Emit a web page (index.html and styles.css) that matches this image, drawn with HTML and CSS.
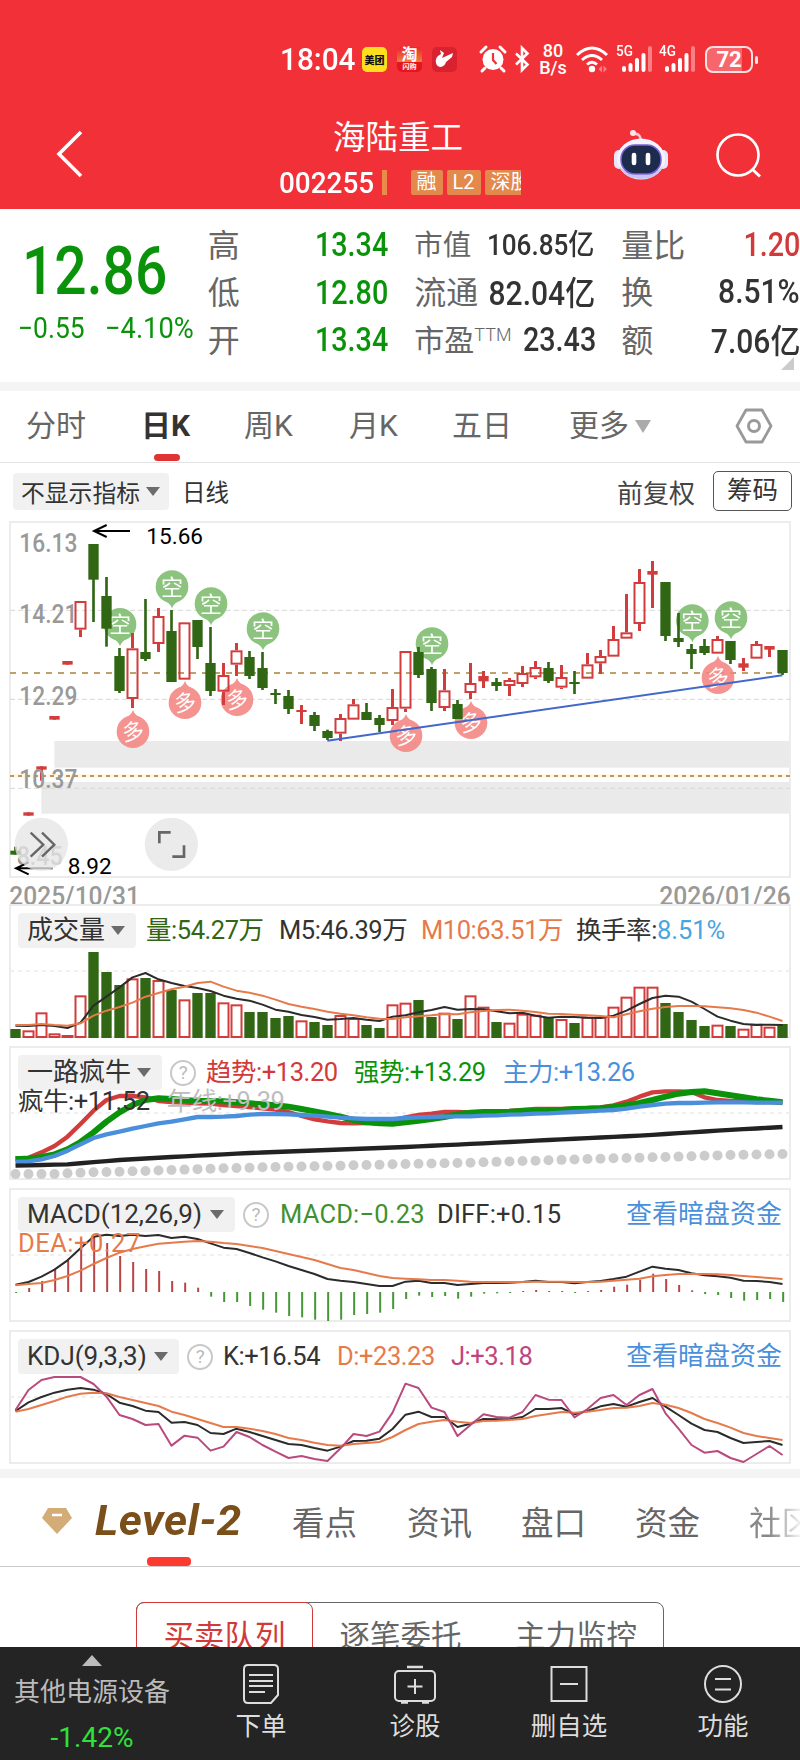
FILE: index.html
```html
<!DOCTYPE html>
<html lang="zh-CN">
<head>
  <meta charset="UTF-8">
  <meta name="viewport" content="width=device-width, initial-scale=1.0">
  <title>海陆重工 002255</title>
  <link rel="stylesheet" href="styles.css">
</head>
<body>

  <header class="top">
    <div class="status">
      <span class="time num">18:04</span>
      <span class="app meituan">美团</span>
      <span class="app taobao">淘<small>闪购</small></span>
      <span class="app bird">
        <svg width="26" height="26" viewBox="0 0 26 26"><path d="M8 4 L12 7 L10 12 L21 7 L20 11 L14 16 Q13 20 9 21 Q5 21 4 17 Q3 13 6 10 L9 8Z" fill="#fff"/></svg>
      </span>
      <svg class="alarm" width="28" height="28" viewBox="0 0 28 28">
        <circle cx="14" cy="14.500" r="10.500" fill="#fff"/>
        <path d="M2 7 L7 2 M26 7 L21 2 M6 23 L3 26 M22 23 L25 26" stroke="#fff" stroke-width="3" stroke-linecap="round"/>
        <path d="M14 8 V15 L17.500 19" stroke="#f23038" stroke-width="2.200" fill="none"/>
      </svg>
      <svg class="bt" width="16" height="28" viewBox="0 0 16 28"><path d="M2 8.500 L13.500 19.500 L8 25 V3 L13.500 8.500 L2 19.500" fill="none" stroke="#fff" stroke-width="2.600"/></svg>
      <span class="speed">80<br>B/s</span>
      <svg class="wifi" width="34" height="28" viewBox="0 0 34 28">
        <path d="M2 10 Q17 -4 32 10 M7 15 Q17 6 27 15 M12 19.500 Q17 15 22 19.500" fill="none" stroke="#fff" stroke-width="3"/>
        <circle cx="17" cy="24" r="3.200" fill="#fff"/>
        <path d="M23.500 24 L27 20.500 V27.500Z M32 24 L28.500 20.500 V27.500Z" fill="#f98084"/>
      </svg>
      <span class="signal"><b>5G</b>
        <svg width="36" height="28" viewBox="0 0 36 28"><path d="M6 23 V25 M12.500 20 V25 M19 15 V25 M25.500 10 V25" stroke="#fff" stroke-width="4" stroke-linecap="round"/><path d="M32 3 V25" stroke="#f98084" stroke-width="4" stroke-linecap="round"/></svg>
      </span>
      <span class="signal"><b>4G</b>
        <svg width="36" height="28" viewBox="0 0 36 28"><path d="M6 23 V25 M12.500 20 V25 M19 15 V25 M25.500 10 V25" stroke="#fff" stroke-width="4" stroke-linecap="round"/><path d="M32 3 V25" stroke="#f98084" stroke-width="4" stroke-linecap="round"/></svg>
      </span>
      <span class="battery">72</span>
    </div>

    <div class="title-bar">
      <svg class="back" width="30" height="50" viewBox="0 0 30 50"><path d="M26 3 L4 25 L26 47" fill="none" stroke="#fff" stroke-width="3.600"/></svg>
      <div class="stock">
        <h1>海陆重工</h1>
        <div class="code-row">
          <span class="code num">002255</span>
          <i class="bar"></i>
          <div class="tags"><span>融</span><span>L2</span><span>深股</span></div>
        </div>
      </div>
      <svg class="robot" width="56" height="54" viewBox="0 0 56 54">
        <path d="M28 12 Q27 5 21 6" fill="none" stroke="#f5c8d8" stroke-width="2.500"/>
        <circle cx="20" cy="5" r="3" fill="#fde5ea"/>
        <rect x="1" y="22" width="10" height="19" rx="5" fill="#e9e5fb"/>
        <rect x="45" y="22" width="10" height="19" rx="5" fill="#e9e5fb"/>
        <ellipse cx="28" cy="31" rx="24" ry="20.500" fill="#f4f3ff"/>
        <path d="M6 38 Q12 51 28 51 Q44 51 50 38 Q42 47 28 47 Q14 47 6 38Z" fill="#c9c4f5"/>
        <rect x="8" y="17" width="40" height="29" rx="14" fill="#1d2c4d" stroke="#7a63d8" stroke-width="1.500"/>
        <path d="M21 27 V35 M35 27 V35" stroke="#fff" stroke-width="4.600" stroke-linecap="round"/>
      </svg>
      <svg class="search" width="46" height="46" viewBox="0 0 46 46"><circle cx="22" cy="22" r="20.500" fill="none" stroke="#fff" stroke-width="2.600"/><path d="M36 36 L44 43.500" stroke="#fff" stroke-width="3"/></svg>
    </div>
  </header>

  <section class="quote">
    <div class="price">
      <div class="now num">12.86</div>
      <div class="change"><span class="num">−0.55</span><span class="num">−4.10%</span></div>
    </div>
    <dl class="col c1">
      <div><dt>高</dt><dd class="green">13.34</dd></div>
      <div><dt>低</dt><dd class="green">12.80</dd></div>
      <div><dt>开</dt><dd class="green">13.34</dd></div>
    </dl>
    <dl class="col c2">
      <div><dt class="s28">市值</dt><dd class="s29">106.85亿</dd></div>
      <div><dt>流通</dt><dd class="wide">82.04亿</dd></div>
      <div><dt class="s30">市盈<sup>TTM</sup></dt><dd>23.43</dd></div>
    </dl>
    <dl class="col c3">
      <div><dt>量比</dt><dd class="red">1.20</dd></div>
      <div><dt>换</dt><dd class="wide">8.51%</dd></div>
      <div><dt>额</dt><dd class="wide">7.06亿</dd></div>
    </dl>
    <i class="corner"></i>
  </section>

  <nav class="periods">
    <a>分时</a>
    <a class="active">日K</a>
    <a>周K</a>
    <a>月K</a>
    <a>五日</a>
    <a>更多<i class="caret"></i></a>
    <svg width="38" height="36" viewBox="0 0 38 36"><path d="M11 2 H27 L36 18 L27 34 H11 L2 18Z" fill="none" stroke="#999" stroke-width="2.800" stroke-linejoin="round"/><circle cx="19" cy="18" r="5.500" fill="none" stroke="#999" stroke-width="3"/></svg>
  </nav>

  <div class="tools">
    <span class="pill">不显示指标<i class="caret"></i></span>
    <span class="line-name">日线</span>
    <span class="adjust">前复权</span>
    <span class="chips">筹码</span>
  </div>

  <section class="main-chart">
    <svg id="kline" width="800" height="390" viewBox="0 0 2400 1170"></svg>
  </section>

  <section class="panel vol">
    <svg id="vol" width="800" height="142" viewBox="0 0 2400 426"></svg>
    <div class="head">
      <span class="pill">成交量<i class="caret"></i></span>
      <span class="dgreen">量:54.27万</span>
      <span>M5:46.39万</span>
      <span class="orange">M10:63.51万</span>
      <span>换手率:<em>8.51%</em></span>
    </div>
  </section>

  <section class="panel trend">
    <svg id="trend" width="800" height="142" viewBox="0 0 2400 426"></svg>
    <div class="head">
      <span class="pill">一路疯牛<i class="caret"></i></span>
      <i class="help">?</i>
      <span class="red">趋势:+13.20</span>
      <span class="green">强势:+13.29</span>
      <span class="blue">主力:+13.26</span>
    </div>
    <div class="head second"><span>疯牛:+11.52</span><span class="gray">年线:+9.39</span></div>
  </section>

  <section class="panel macd">
    <svg id="macd" width="800" height="142" viewBox="0 0 2400 426"></svg>
    <div class="head">
      <span class="pill">MACD(12,26,9)<i class="caret"></i></span>
      <i class="help">?</i>
      <span class="mgreen">MACD:−0.23</span>
      <span>DIFF:+0.15</span>
      <a class="blue">查看暗盘资金</a>
    </div>
    <div class="head second"><span class="orange">DEA:+0.27</span></div>
  </section>

  <section class="panel kdj">
    <svg id="kdj" width="800" height="142" viewBox="0 0 2400 426"></svg>
    <div class="head">
      <span class="pill">KDJ(9,3,3)<i class="caret"></i></span>
      <i class="help">?</i>
      <span>K:+16.54</span>
      <span class="orange">D:+23.23</span>
      <span class="pink">J:+3.18</span>
      <a class="blue">查看暗盘资金</a>
    </div>
  </section>

  <nav class="info-tabs">
    <svg width="32" height="28" viewBox="0 0 32 28"><path d="M7 1 H25 L31 11 L16 27 L1 11Z" fill="#d3ac78"/><path d="M11 8 H21" stroke="#fff" stroke-width="2.500"/></svg>
    <a class="level">Level-2</a>
    <a>看点</a>
    <a>资讯</a>
    <a>盘口</a>
    <a>资金</a>
    <a class="fade">社区</a>
  </nav>

  <div class="segments">
    <a class="on">买卖队列</a><a>逐笔委托</a><a>主力监控</a>
  </div>

  <footer class="bottom">
    <div class="sector">
      <i class="up"></i>
      <span>其他电源设备</span>
      <b class="num">-1.42%</b>
    </div>
    <a>
      <svg width="44" height="42" viewBox="0 0 44 42"><path d="M9 2 H35 Q39 2 39 6 V32 L32 40 H9 Q5 40 5 36 V6 Q5 2 9 2Z M10 12 H34 M10 18 H34 M10 23 H34 M10 29 H26" fill="none" stroke="#ddd" stroke-width="2"/></svg>
      下单
    </a>
    <a>
      <svg width="44" height="42" viewBox="0 0 44 42"><rect x="2" y="8" width="40" height="30" rx="4" fill="none" stroke="#ddd" stroke-width="2"/><path d="M14 4 H30 M8 39.500 H15 M29 39.500 H36" stroke="#ddd" stroke-width="2.500"/><path d="M22 16 V31 M14.500 23.500 H29.500" stroke="#ddd" stroke-width="2"/></svg>
      诊股
    </a>
    <a>
      <svg width="44" height="42" viewBox="0 0 44 42"><path d="M4.500 4 H39.500 V38 H4.500Z M13 21 H31" fill="none" stroke="#ddd" stroke-width="2"/></svg>
      删自选
    </a>
    <a>
      <svg width="44" height="42" viewBox="0 0 44 42"><circle cx="22" cy="21" r="18" fill="none" stroke="#ddd" stroke-width="2"/><path d="M14 16 H30 M14 26.500 H30" stroke="#ddd" stroke-width="2.200"/></svg>
      功能
    </a>
  </footer>

  <script src="charts.js"></script>
</body>
</html>
```

FILE: styles.css
```css
* {
  box-sizing: border-box;
}

body {
  margin: 0;
  width: 800px;
  height: 1760px;
  overflow: hidden;
  display: flex;
  flex-direction: column;
  background: #fff;
  color: #333;
  font-family: Roboto, "Noto Sans CJK SC", sans-serif;
}

body > * {
  flex-shrink: 0;
}

svg {
  display: block;
  overflow: visible;
}

i, em {
  font-style: normal;
}

.num {
  display: inline-block;
  transform-origin: 0 50%;
}

.red { color: #d23a3a; }
.green { color: #0a930a; }
.dgreen { color: #336614; }
.mgreen { color: #3f9130; }
.orange { color: #e67a4a; }
.blue { color: #4a8fdc; }
.pink { color: #c0457e; }
.gray { color: #bdbdbd; }

.caret {
  display: inline-block;
  border: 7px solid transparent;
  border-top: 9px solid #6b6b6b;
  border-bottom: 0;
}

/* header */
.top {
  height: 209px;
  background: #f23038;
  color: #fff;
}

.status {
  display: flex;
  align-items: center;
  height: 118px;
  padding-left: 280px;
}

.time {
  width: 82px;
  font-size: 32px;
  font-weight: 500;
  transform: scaleX(.93);
}

.app {
  display: flex;
  width: 25px;
  height: 25px;
  margin-right: 10px;
  border-radius: 5px;
  justify-content: center;
  align-items: center;
  flex-shrink: 0;
}

.meituan {
  background: #ffde1f;
  color: #111;
  font-size: 10px;
  font-weight: 900;
}

.taobao {
  flex-direction: column;
  background: linear-gradient(#e8262c, #ee7f3c 60%, #e5141e 62%);
  font-size: 16px;
  line-height: 16px;
  font-weight: 700;
}

.taobao small {
  font-size: 7px;
  line-height: 8px;
}

.bird {
  background: #d9222f;
}

.alarm { margin-left: 12px; }
.bt { margin-left: 7px; }

.speed {
  width: 32px;
  margin-left: 7px;
  font-size: 18px;
  line-height: 17px;
  text-align: center;
  font-weight: 500;
}

.wifi { margin-left: 6px; }

.signal {
  position: relative;
  width: 36px;
  margin-left: 7px;
}

.wifi + .signal { margin-left: 9px; }

.signal b {
  position: absolute;
  left: -2px;
  top: -1px;
  font-size: 15px;
  line-height: 15px;
  font-weight: 500;
  transform: scaleX(.9);
  transform-origin: 0 0;
}

.battery {
  position: relative;
  width: 48px;
  height: 27px;
  margin-left: 8px;
  border: 2px solid #fde0e1;
  border-radius: 8px;
  background: linear-gradient(90deg, #f7666c 80%, transparent 80%);
  font-size: 22px;
  font-weight: 700;
  line-height: 23px;
  text-align: center;
}

.battery::after {
  content: "";
  position: absolute;
  right: -7px;
  top: 8px;
  width: 3px;
  height: 8px;
  border-radius: 2px;
  background: #fde0e1;
}

.title-bar {
  display: flex;
  height: 91px;
  padding-left: 55px;
}

.back { margin-top: 11px; }

.stock {
  width: 242px;
  margin-left: 194px;
}

.stock h1 {
  margin: 1px 0 0 54px;
  font-size: 32.500px;
  line-height: 38px;
  font-weight: 400;
}

.code-row {
  display: flex;
  align-items: center;
  height: 32px;
  margin-top: 9px;
}

.code {
  width: 103px;
  font-size: 30px;
  font-weight: 500;
  transform: scaleX(.93);
}

.bar {
  width: 5px;
  height: 25px;
  background: #ea8b4c;
}

.tags {
  display: flex;
  gap: 4px;
  width: 111px;
  margin-left: 24px;
  overflow: hidden;
}

.tags span {
  flex-shrink: 0;
  height: 25px;
  padding: 0 6px;
  border-radius: 2px;
  background: #e2894b;
  font-size: 20px;
  line-height: 24px;
}

.robot { margin: 10px 0 0 92px; }
.search { margin: 15px 0 0 47px; }

/* quote */
.quote {
  position: relative;
  display: flex;
  box-sizing: content-box;
  height: 173px;
  border-bottom: 9px solid #f4f4f4;
}

.price {
  width: 208px;
  padding: 21px 0 0 22px;
  color: #0a930a;
}

.now {
  font-size: 67px;
  line-height: 82px;
  font-weight: 500;
  transform: scaleX(.85);
}

.change {
  display: flex;
  margin: -1px 0 0 -4px;
  font-size: 29px;
  line-height: 34px;
}

.change span {
  width: 87px;
  transform: scaleX(.91);
}

.change span + span { transform: scaleX(.94); }

.col {
  margin: 12px 0 0;
}

.col div {
  display: flex;
  justify-content: space-between;
  align-items: center;
  height: 47.500px;
}

.c1 { width: 181px; }
.c2 { width: 180px; margin-left: 26px; }
.c3 { width: 179px; margin-left: 27px; }

dt {
  margin-top: -4px;
  color: #666;
  font-size: 32px;
  white-space: nowrap;
}

dt.s28 { font-size: 28.500px; }
dt.s30 { font-size: 30px; }

dt sup {
  font-size: 18px;
  font-weight: 300;
  line-height: 0;
  vertical-align: 10px;
}

dd {
  margin: 0;
  font-size: 33px;
  font-weight: 500;
  white-space: nowrap;
  transform: scaleX(.87);
  transform-origin: 100% 50%;
}

dd.wide { margin-top: -2px; transform: scaleX(.91); }
dd.s29 { margin-top: -5px; font-size: 29px; transform: scaleX(.9); }

.corner {
  position: absolute;
  right: 6px;
  bottom: 12px;
  border-left: 13px solid transparent;
  border-bottom: 13px solid #ccc;
}

/* period tabs */
.periods {
  display: grid;
  grid-template-columns: 115px 103px 105px 103px 117px 166px 38px;
  align-items: center;
  height: 72px;
  padding: 0 0 1px 26px;
  border-bottom: 1px solid #e2e2e2;
  color: #666;
  font-size: 30px;
}

.periods a {
  position: relative;
  top: -3px;
}

.periods .caret {
  border-width: 13px 8px 0;
  border-top-color: #aaa;
  margin-left: 6px;
  vertical-align: 3px;
}

.periods .active {
  color: #333;
  font-weight: 700;
}

.periods .active::after {
  content: "";
  position: absolute;
  left: 13px;
  bottom: -16px;
  width: 26px;
  height: 7px;
  border-radius: 4px;
  background: #e03434;
}

.tools {
  display: flex;
  align-items: center;
  height: 47px;
  padding: 9px 8px 0 13px;
}

.pill {
  display: flex;
  align-items: center;
  justify-content: space-between;
  height: 35px;
  padding: 0 11px 0 9px;
  border-radius: 4px;
  background: #f1f1f1;
  white-space: nowrap;
}

.tools .pill { width: 156px; height: 37px; padding: 0 9px 0 8px; font-size: 23.800px; }
.line-name { margin-left: 13px; font-size: 23.500px; }
.adjust { margin-left: auto; font-size: 26px; color: #444; }

.chips {
  width: 79px;
  height: 40px;
  margin-left: 18px;
  border: 1.500px solid #555;
  border-radius: 5px;
  font-size: 25.500px;
  line-height: 36px;
  text-align: center;
}

/* charts */
.main-chart { height: 390px; }

.panel {
  position: relative;
  height: 142px;
}

.head {
  position: absolute;
  left: 18px;
  top: 13px;
  width: 764px;
  display: grid;
  align-items: center;
  height: 35px;
  font-size: 25.500px;
  white-space: nowrap;
  letter-spacing: -.450px;
}

.head span, .head a { line-height: 35px; }
.head a { font-size: 26px; letter-spacing: 0; }
.head .pill { font-size: 26px; letter-spacing: 0; }
.head em { color: #49a5df; letter-spacing: 0; }
.second { top: 42px; left: 18px; }

.vol .head { grid-template-columns: 128px 133px 142px 155px 1fr; }
.vol .pill { width: 118px; }
.trend .head { grid-template-columns: 152px 36px 148px 149px 1fr; }
.trend .pill { width: 144px; }
.trend .second { display: flex; gap: 17px; }
.macd .head { grid-template-columns: 225px 37px 157px 1fr auto; letter-spacing: .200px; }
.macd .pill { width: 217px; }
.macd .second { display: flex; letter-spacing: .500px; }
.kdj .head { grid-template-columns: 169px 36px 114px 114px 1fr auto; }
.kdj .pill { width: 161px; }

.help {
  width: 26px;
  height: 26px;
  border: 2px solid #c8c8c8;
  border-radius: 50%;
  color: #bbb;
  font-size: 19px;
  line-height: 22px;
  text-align: center;
}

/* info tabs */
.info-tabs {
  position: relative;
  display: grid;
  grid-template-columns: 54px 197px 115px 114px 114px 114px 60px;
  align-items: center;
  height: 98px;
  margin-top: 1px;
  padding: 0 0 3px 41px;
  border-top: 9px solid #f4f4f4;
  border-bottom: 1px solid #ccc;
  color: #666;
  font-size: 32.500px;
}

.level {
  color: #7a4f1a;
  font: italic 700 42px Roboto, sans-serif;
  letter-spacing: .500px;
  transform: scaleX(1.05);
  transform-origin: 0 50%;
}

.info-tabs::after {
  content: "";
  position: absolute;
  left: 147px;
  bottom: 0;
  width: 44px;
  height: 9px;
  border-radius: 4px;
  background: #fb3a30;
}

.fade {
  background: linear-gradient(90deg, #888 20px, #eee 50px);
  background-clip: text;
  -webkit-background-clip: text;
  color: transparent;
  white-space: nowrap;
}

.segments {
  display: grid;
  grid-template-columns: 176px 175px 176px;
  width: 528px;
  height: 80px;
  margin: 35px 0 -35px 136px;
  border: 1px solid #666;
  border-radius: 8px;
  color: #666;
  font-size: 30.500px;
  line-height: 68px;
  text-align: center;
}

.segments .on {
  margin: -1px 0 0 -1px;
  border: 1px solid #d23a3a;
  border-radius: 8px;
  color: #d23a3a;
}

/* bottom bar */
.bottom {
  position: fixed;
  left: 0;
  bottom: 0;
  display: grid;
  grid-template-columns: 184px repeat(4, 154px);
  width: 800px;
  height: 113px;
  background: #242424;
  color: #ddd;
  font-size: 25.500px;
}

.bottom a, .sector {
  display: flex;
  flex-direction: column;
  align-items: center;
}

.bottom a svg { margin: 16px 0 2px; }
.bottom a { line-height: 38px; }

.up {
  margin-top: 8px;
  border: 10px solid transparent;
  border-top: 0;
  border-bottom: 11px solid #bbb;
}

.sector span {
  margin-top: 7px;
  font-size: 26px;
  line-height: 38px;
  color: #bbb;
}

.sector b {
  margin-top: 10px;
  font-size: 28px;
  line-height: 34px;
  font-weight: 400;
  color: #2fe23a;
  transform-origin: center;
}
```

FILE: charts.js
```js
// all charts share one 3x coordinate space
const STEP = 39, X0 = 46.5;
const RED = '#d23c3c', GREEN = '#306614';
const x = i => X0 + STEP * i;

// [up, high, body top, body bottom, low]
const candles = [
  [0,1010,1022,1034,1034],[1,907,907,917,917],[1,769,769,779,812],[1,618,618,629,629],[1,453,453,464,464],
  [1,273,273,359,381],[0,102,102,209,336],[0,201,258,356,410],[0,414,438,543,549],[1,369,415,567,594],
  [0,267,426,447,453],[1,294,318,402,426],[0,300,363,516,516],[1,337,337,509,509],[0,330,330,411,447],
  [0,351,459,543,558],[1,459,495,545,585],[1,399,421,464,498],[0,423,441,498,507],[0,426,474,534,540],
  [0,537,549,555,582],[0,540,558,597,612],[1,585,600,606,642],[0,606,615,648,663],[0,659,663,684,690],
  [1,612,624,671,693],[1,567,583,629,629],[0,579,606,630,630],[0,615,624,645,666],[1,537,591,633,645],
  [1,423,423,596,606],[0,411,426,495,504],[0,471,477,579,603],[1,477,541,594,603],[0,570,582,627,627],
  [1,459,519,549,567],[1,483,498,514,534],[0,504,516,528,543],[1,504,510,528,558],[1,468,489,522,531],
  [1,453,471,502,507],[0,456,474,513,519],[1,465,501,533,537],[0,483,516,522,552],[1,429,463,506,506],
  [1,420,438,460,492],[1,348,387,440,440],[1,252,367,386,386],[1,177,216,342,363],[1,153,183,194,294],
  [0,216,216,378,393],[0,309,384,396,411],[0,402,417,432,477],[0,387,408,429,435],[1,378,387,431,431],
  [0,393,393,450,462],[1,444,460,473,483],[1,393,402,446,446],[1,408,408,419,441],[0,420,420,489,495]
];

const volTop = [387,391,337,400,405,286,156,216,255,235,234,240,270,298,279,279,307,313,336,336,354,348,361,366,375,345,354,375,384,313,
  308,300,351,338,357,286,320,366,368,341,344,354,357,369,350,350,320,290,260,260,309,336,360,378,374,378,386,371,380,372];
const m5 = [377,378,375,378,384,368,317,290,262,232,219,238,249,258,264,273,287,296,302,314,329,335,345,351,359,357,354,359,363,350,
  346,337,330,321,329,327,328,334,340,338,347,353,350,351,353,354,347,332,312,294,287,290,305,327,350,362,372,375,374,375];
const m10 = [375,375,372,375,377,370,347,332,321,308,290,279,268,260,249,245,260,272,278,287,299,312,320,327,335,341,346,352,356,357,
  352,349,346,342,343,337,333,330,329,332,336,341,342,344,346,348,352,343,334,326,321,318,318,319,322,325,330,338,350,363];

const trendRed = [775,773,757,738,710,672,632,600,588,588,592,603,606,608,610,611,615,618,621,625,629,636,648,658,664,669,670,669,665,660,
  652,645,641,636,636,637,636,635,633,630,627,627,627,625,624,622,616,605,590,577,574,574,576,592,600,603,604,606,606,607];
const trendGreen = [777,776,771,763,748,726,697,665,637,615,600,595,597,600,603,603,604,607,610,613,616,620,627,634,642,650,660,667,670,671,
  667,662,657,651,643,638,636,636,635,633,632,631,630,627,626,625,621,616,609,600,590,581,576,574,580,586,592,598,602,607];
const trendBlue = [786,784,778,768,752,733,714,703,695,686,678,670,665,658,651,651,650,648,644,642,642,643,645,647,650,653,655,657,657,657,
  654,652,651,650,649,649,647,646,644,643,641,640,638,636,634,632,630,626,620,615,611,609,609,608,607,607,607,608,608,608];
const bull = [[0,797],[4,793],[8,780],[12,771],[18,759],[24,750],[30,741],[36,730],[42,718],[48,707],[54,692],[59,681]];
const year = [[0,822],[3,822],[5,818],[10,813],[15,806],[20,801],[25,797],[30,792],[35,788],[40,782],[45,776],[50,771],[55,765],[59,762]];

const macdBar = [339,324,303,270,237,205,170,189,228,246,267,273,303,308,323,350,366,366,378,389,398,408,412,419,423,419,405,402,398,387,
  357,347,351,348,356,350,341,340,339,333,330,333,333,339,333,330,320,314,299,281,297,315,331,342,345,354,362,360,357,366];
const diff = [314,306,290,269,241,205,170,164,168,164,168,165,174,170,177,190,203,207,219,232,244,258,270,282,297,302,306,312,318,318,
  305,302,309,309,315,312,309,309,308,306,302,306,306,310,306,303,297,290,275,260,266,270,280,286,289,293,302,303,306,312];
const dea = [316,312,309,300,288,272,252,234,218,207,199,191,188,185,183,185,189,192,198,204,213,222,231,240,252,264,270,279,288,294,
  296,298,300,300,302,305,306,306,306,306,305,305,305,306,306,305,302,299,296,289,285,282,282,282,283,285,288,291,294,297];

const k = [693,667,651,638,629,624,629,642,668,678,692,696,728,726,735,759,762,746,756,768,780,792,795,804,812,800,783,782,776,747,
  704,695,711,711,741,731,717,718,717,711,687,687,684,703,693,679,672,680,666,654,680,705,731,750,756,774,789,786,783,795];
const d = [695,687,675,663,650,641,638,640,651,660,669,678,695,705,717,729,741,741,746,753,762,774,780,788,795,797,792,789,786,771,
  750,732,725,720,725,729,723,722,720,717,708,702,696,698,695,690,684,683,678,669,674,684,699,717,729,743,759,768,774,780];
const j = [690,630,600,591,591,591,612,650,705,717,735,732,797,767,773,812,800,756,771,795,815,834,828,837,843,805,762,768,755,698,
  611,624,683,696,768,735,703,711,713,696,645,659,660,712,687,654,645,675,645,627,700,746,795,818,813,834,846,822,798,825];

const rect = (x, y, w, h, attr) => `<rect x="${x}" y="${y}" width="${w}" height="${h}" ${attr}/>`;
const path = (d, color, w, extra = '') => `<path d="${d}" fill="none" stroke="${color}" stroke-width="${w}" ${extra}/>`;
const dash = (y, color, w, pattern) => path(`M30 ${y}H2370`, color, w, `stroke-dasharray="${pattern}"`);
const line = (ys, dy, color, w) => path('M' + ys.map((y, i) => x(i) + ' ' + (y - dy)).join('L'), color, w, 'stroke-linejoin="round"');
const text = (s, x, y, len, size, color, weight = 400) =>
  `<text x="${x}" y="${y}" font-size="${size}" font-weight="${weight}" fill="${color}" textLength="${len}" lengthAdjust="spacingAndGlyphs">${s}</text>`;
const frame = () => rect(30, 15, 2340, 396, 'fill="none" stroke="#ececec" stroke-width="6"');

// fill the gaps between [index, y] points
function spread(points) {
  const out = [];
  for (let n = 0; n < points.length - 1; n++) {
    const [a, ya] = points[n], [b, yb] = points[n + 1];
    for (let i = a; i < b; i++) out.push(ya + (yb - ya) * (i - a) / (b - a));
  }
  out.push(points[points.length - 1][1]);
  return out;
}

function marker(x, y, up) {
  const s = up ? -1 : 1;
  return `<g opacity=".88"><circle cx="${x}" cy="${y}" r="49" fill="${up ? '#f48582' : '#7dbb6e'}"/>
    <path d="M${x - 26} ${y + s * 40}Q${x - 6} ${y + s * 48} ${x} ${y + s * 65}Q${x + 6} ${y + s * 48} ${x + 26} ${y + s * 40}Z" fill="${up ? '#f48582' : '#7dbb6e'}"/>
    <text x="${x}" y="${y + 24}" font-size="66" fill="#fff" text-anchor="middle" ${up ? `transform="rotate(-8 ${x} ${y})"` : ''}>${up ? '多' : '空'}</text></g>`;
}

function drawKline() {
  let s = rect(163, 693, 2207, 80, 'fill="#eaeaea"') + rect(124, 816, 2246, 95, 'fill="#eaeaea"');
  s += rect(30, 36, 2340, 1065, 'fill="none" stroke="#ececec" stroke-width="6"');
  [301, 568, 835].forEach(y => s += dash(y, '#d8d8d8', 3, '15 9'));
  s += dash(489, '#c0a06a', 6, '18 18');
  s += path('M30 798H2370', '#fff8e6', 12) + dash(798, '#bf9560', 6, '12 12');
  s += text('16.13', 58, 126, 174, 76, '#999', 500) + text('14.21', 58, 339, 174, 76, '#999', 500);
  s += text('12.29', 58, 585, 174, 76, '#999', 500) + text('8.45', 50, 1064, 138, 76, '#999', 500);
  s += text('2025/10/31', 28, 1185, 392, 76, '#999', 500) + text('2026/01/26', 1978, 1185, 394, 76, '#999', 500);

  [[360,343],[516,230],[633,281],[789,356],[1296,401],[2077,332],[2193,323]].forEach(m => s += marker(m[0], m[1], false));
  [[399,665],[555,578],[711,569],[1218,677],[1413,638],[2154,503]].forEach(m => s += marker(m[0], m[1], true));

  candles.forEach(([up, hi, top, bot, lo], i) => {
    const c = up ? RED : GREEN, cx = x(i);
    if (up && bot - top > 16) {
      s += path(`M${cx} ${hi}V${top}M${cx} ${bot}V${lo}`, c, 9);
      s += rect(cx - 15, top + 3, 30, bot - top - 6, `fill="none" stroke="${c}" stroke-width="6"`);
    } else {
      s += path(`M${cx} ${hi}V${lo}`, c, up ? 9 : 8) + rect(cx - 15.5, top, 31, bot - top, `fill="${c}"`);
    }
  });
  s += text('10.37', 58, 834, 174, 76, '#999', 500);
  s += path('M982 692L2347 496', '#4368cc', 6);
  s += path('M390 63H284M320 45L282 63L320 81', '#000', 6) + text('15.66', 439, 102, 170, 66, '#000');
  s += path('M158 1075H50M86 1057L48 1075L86 1093', '#000', 6) + text('8.92', 203, 1092, 132, 66, '#000');
  s += '<circle cx="124" cy="1003" r="80" fill="#e6e6e6" opacity=".78"/><circle cx="514" cy="1003" r="80" fill="#ebebeb"/>';
  s += path('M92 968L130 1004L92 1040M126 968L163 1004L126 1040', '#666', 7);
  s += path('M478 1000V967H512M517 1040H552V1006', '#666', 8);
  document.getElementById('kline').innerHTML = s;
}

function drawVol() {
  let s = frame() + dash(213, '#ececec', 5, '12 12');
  volTop.forEach((y, i) => {
    s += candles[i][0]
      ? rect(x(i) - 15, y + 3, 30, Math.max(411 - y - 3, 3), `fill="none" stroke="${RED}" stroke-width="6"`)
      : rect(x(i) - 15.5, y, 31, 414 - y, `fill="${GREEN}"`);
  });
  s += line(m5, 0, '#2b2b2b', 6) + line(m10, 0, '#e67a4a', 6);
  document.getElementById('vol').innerHTML = s;
}

function drawTrend() {
  let s = frame() + dash(213, '#ececec', 5, '12 12');
  s += line(trendRed, 426, '#d23c3c', 13) + line(trendGreen, 426, '#0a930a', 18) + line(trendBlue, 426, '#4a8fdc', 13);
  s += line(spread(bull), 426, '#222', 13);
  spread(year).forEach((y, i) => s += `<circle cx="${x(i)}" cy="${y - 426}" r="15" fill="#ccc"/>`);
  document.getElementById('trend').innerHTML = s;
}

function drawMacd() {
  let s = frame() + dash(213, '#ececec', 5, '12 12');
  macdBar.forEach((y, i) => s += path(`M${x(i) + 2} 324V${y - 12}`, y < 336 ? '#b84444' : '#469638', 6));
  s += line(diff, 12, '#2b2b2b', 6) + line(dea, 12, '#e67a4a', 6);
  document.getElementById('macd').innerHTML = s;
}

function drawKdj() {
  let s = frame() + dash(213, '#ececec', 5, '12 12');
  s += line(k, 438, '#2b2b2b', 6) + line(d, 438, '#e67a4a', 6) + line(j, 438, '#b84a7e', 6);
  document.getElementById('kdj').innerHTML = s;
}

drawKline();
drawVol();
drawTrend();
drawMacd();
drawKdj();
```
